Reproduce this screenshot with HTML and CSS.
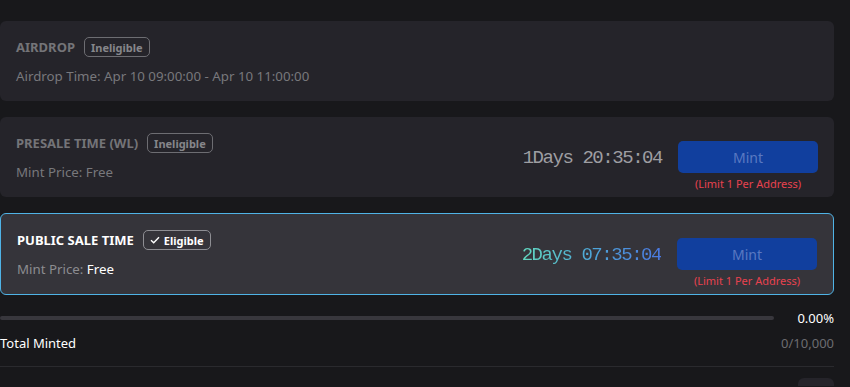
FILE: index.html
```html
<!DOCTYPE html>
<html>
<head>
<meta charset="utf-8">
<link rel="stylesheet" href="styles.css">
</head>
<body>
<div class="wrap">
  <div class="card">
    <div class="info">
      <div class="head">
        <span class="title">AIRDROP</span>
        <span class="badge">Ineligible</span>
      </div>
      <div class="sub">Airdrop Time: Apr 10 09:00:00 - Apr 10 11:00:00</div>
    </div>
  </div>

  <div class="card">
    <div class="info">
      <div class="head">
        <span class="title">PRESALE TIME (WL)</span>
        <span class="badge">Ineligible</span>
      </div>
      <div class="sub">Mint Price: Free</div>
    </div>
    <div class="side">
      <div class="count">1Days 20:35:04</div>
      <div class="mintbox">
        <button class="mint">Mint</button>
        <div class="limit">(Limit 1 Per Address)</div>
      </div>
    </div>
  </div>

  <div class="card active">
    <div class="info">
      <div class="head">
        <span class="title">PUBLIC SALE TIME</span>
        <span class="badge"><svg class="check" width="10" height="8" viewBox="0 0 10 8"><path d="M1 4.2 L3.7 6.8 L9 1.2" fill="none" stroke="currentColor" stroke-width="1.4"/></svg>Eligible</span>
      </div>
      <div class="sub">Mint Price: <span class="val">Free</span></div>
    </div>
    <div class="side">
      <div class="count grad">2Days 07:35:04</div>
      <div class="mintbox">
        <button class="mint">Mint</button>
        <div class="limit">(Limit 1 Per Address)</div>
      </div>
    </div>
  </div>

  <div class="progress">
    <div class="bar"></div>
    <div class="pct">0.00%</div>
  </div>
  <div class="total">
    <span class="tlabel">Total Minted</span>
    <span class="tval">0/10,000</span>
  </div>
  <div class="divider"></div>
  <div class="bottom">
    <div class="stub"></div>
  </div>
</div>
</body>
</html>
```

FILE: styles.css
```css
html, body {
  margin: 0;
  padding: 0;
  background: #18181b;
  overflow: hidden;
}
body {
  font-family: "Noto Sans", "Open Sans", sans-serif;
  font-size: 13px;
  color: #fff;
}
.wrap {
  width: 834px;
  padding-top: 21px;
  display: flex;
  flex-direction: column;
}
.card {
  box-sizing: border-box;
  height: 80px;
  margin-bottom: 16px;
  background: #25242a;
  border-radius: 6px;
  padding: 16px;
  display: flex;
  align-items: center;
  justify-content: space-between;
}
.card.active {
  height: 82px;
  background: #35343a;
  border: 1px solid #4fb3e6;
}
.info {
  display: flex;
  flex-direction: column;
  gap: 10px;
}
.head {
  display: flex;
  align-items: center;
  gap: 9px;
  height: 20px;
}
.title {
  font-weight: 700;
  font-size: 13px;
  color: #747478;
}
.active .title { color: #fff; }
.badge {
  display: inline-flex;
  align-items: center;
  gap: 4px;
  height: 20px;
  box-sizing: border-box;
  padding: 0 6px;
  border: 1px solid #6d6d72;
  border-radius: 5px;
  font-size: 11px;
  font-weight: 700;
  color: #86868a;
}
.active .badge {
  color: #fff;
  border-color: #8e8e93;
}
.check { display: block; }
.sub {
  font-size: 13.3px;
  line-height: 18px;
  color: #78787c;
}
.active .sub { color: #8c8c90; }
.val { color: #fff; }
.side {
  display: flex;
  align-items: center;
  gap: 16px;
}
.count {
  font-family: "Liberation Mono", monospace;
  font-size: 19px;
  letter-spacing: -1.45px;
  color: #9e9ea2;
  line-height: 24px;
  padding-top: 2px;
}
.count.grad {
  background: linear-gradient(90deg, #62d8bf 0%, #4ea6d8 50%, #4a78e0 100%);
  -webkit-background-clip: text;
  background-clip: text;
  color: transparent;
}
.mintbox {
  position: relative;
  width: 140px;
}
.mint {
  display: block;
  width: 140px;
  height: 32px;
  border: none;
  border-radius: 5px;
  background: #113f9e;
  color: #5a79c2;
  font-family: inherit;
  font-size: 14px;
  padding: 0;
}
.limit {
  position: absolute;
  top: 36px;
  left: -10px;
  right: -10px;
  text-align: center;
  font-size: 11px;
  line-height: 14px;
  color: #e8424f;
}
.progress {
  display: flex;
  align-items: center;
  gap: 23px;
  height: 16px;
  margin-top: -1px;
}
.bar {
  flex: 1;
  height: 4px;
  border-radius: 2px;
  background: #38373d;
}
.pct {
  color: #fff;
  font-size: 13px;
}
.total {
  display: flex;
  justify-content: space-between;
  align-items: center;
  margin-top: 9px;
  height: 16px;
}
.tlabel { color: #fff; }
.tval { color: #6c6c70; }
.divider {
  height: 1px;
  background: #2a2a2e;
  margin-top: 15px;
}
.bottom {
  display: flex;
  justify-content: flex-end;
  margin-top: 11px;
}
.stub {
  width: 36px;
  height: 8px;
  border-radius: 6px 6px 0 0;
  background: #25242a;
}
```
